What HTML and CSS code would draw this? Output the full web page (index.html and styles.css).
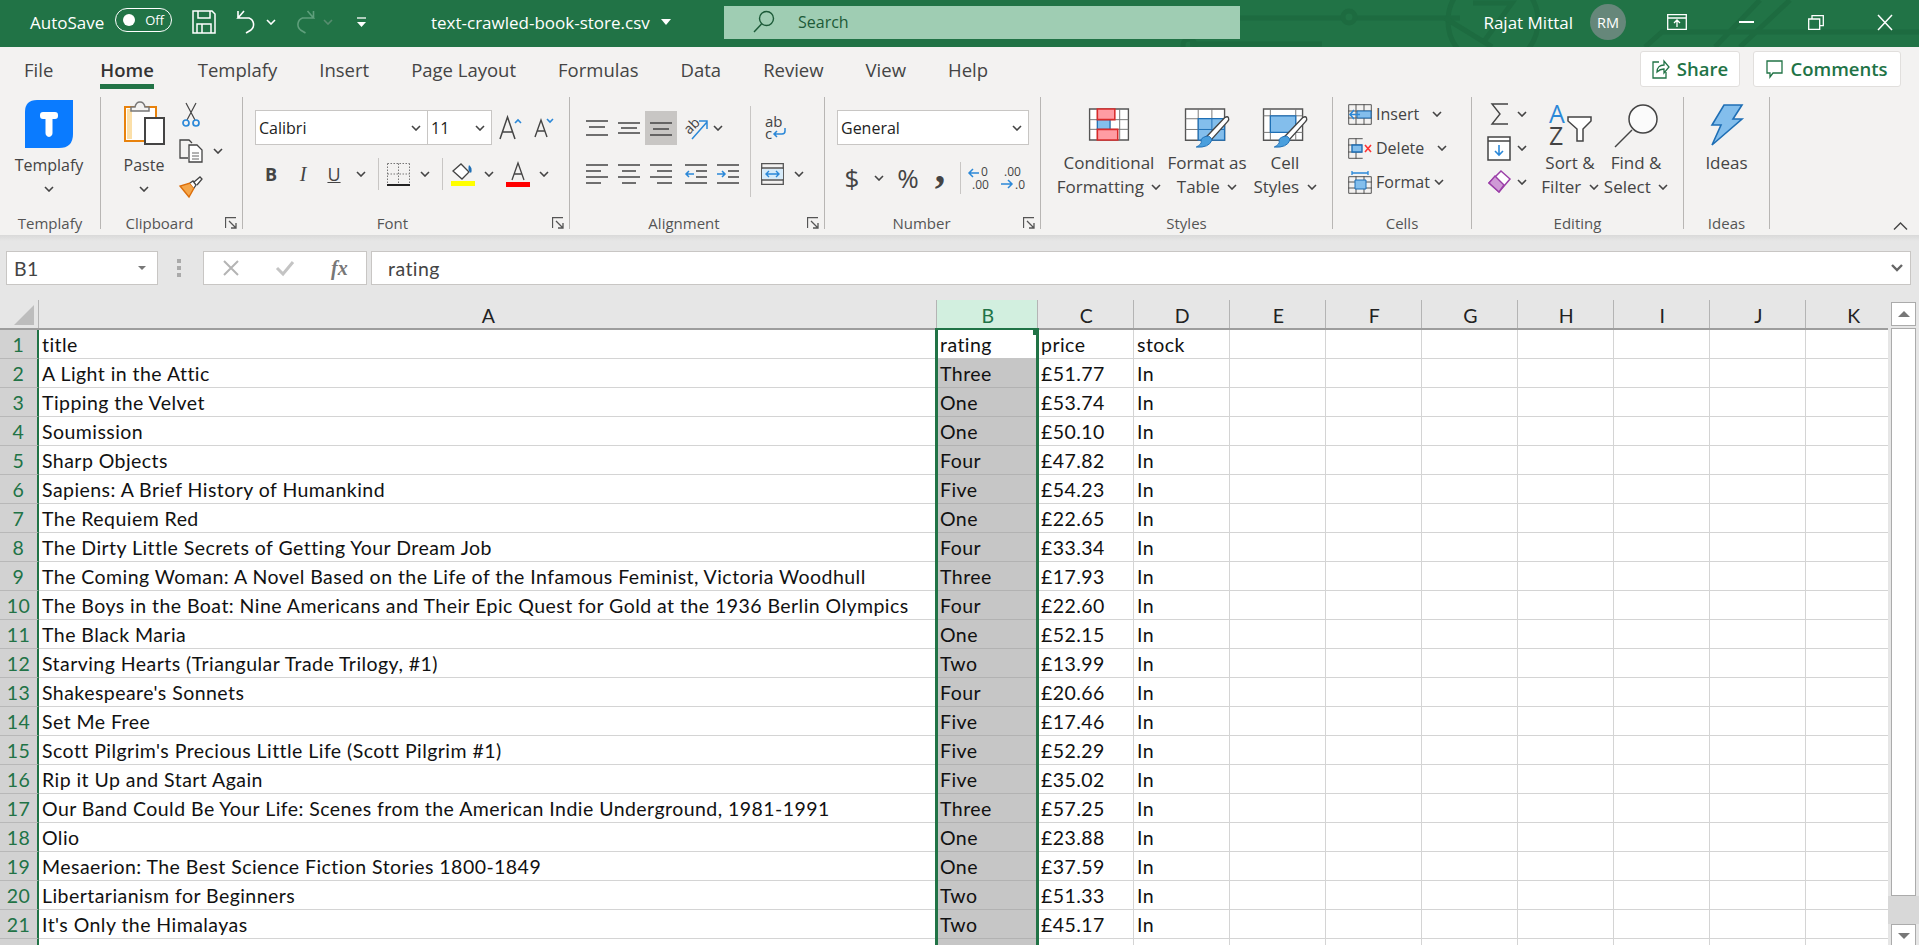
FILE: index.html
```html
<!DOCTYPE html>
<html lang="en">
<head>
  <meta charset="UTF-8" />
  <title>text-crawled-book-store.csv - Excel</title>
  <link rel="stylesheet" href="styles.css">
</head>
<body>
  <svg class="sprite" width="0" height="0">
    <symbol id="chev" viewBox="0 0 10 6"><path d="M1 1l4 4 4-4" fill="none" stroke="#444" stroke-width="1.6"/></symbol>
    <symbol id="launch" viewBox="0 0 12 12"><path d="M.5 11V.5H11M4 4l7 7M11 6v5H6" fill="none" stroke="#555" stroke-width="1.3"/></symbol>
  </svg>

  <header class="titlebar">
    <svg class="circuit" width="819" height="47" viewBox="0 0 819 47">
      <g fill="none" stroke="#1d6b40" stroke-width="5">
        <path d="M87 18H243M255 18H360"/>
        <circle cx="249" cy="17" r="6"/>
        <path d="M90 44H222M83 47v-2a6 6 0 0 1 12 0v2"/>
        <circle cx="393" cy="21" r="45"/>
        <path d="M373 3H412L385 40M345 18L392 47"/>
        <path d="M545 47L562 32H819M615 47L660 0M640 47L690 0"/>
      </g>
    </svg>
    <span class="autosave">AutoSave</span>
    <span class="toggle"><i></i>Off</span>
    <svg class="qa-save" width="24" height="24" viewBox="0 0 24 24"><path d="M1 1h19l3 3v19H1zM6 1v7h12V1M5 23v-9h14v9M10 14v9" fill="none" stroke="#fff" stroke-width="1.5"/></svg>
    <svg class="qa-undo" width="22" height="24" viewBox="0 0 22 24"><path d="M8 1L2 8h11a7 7 0 0 1 2 12l-5 3M2 8l0-7" fill="none" stroke="#fff" stroke-width="1.6"/></svg>
    <svg class="qa-chev" width="10" height="6"><use href="#chev" class="white"/></svg>
    <svg class="qa-redo" width="23" height="24" viewBox="0 0 22 24"><path d="M14 1l6 7H9a7 7 0 0 0-2 12l5 3M20 8V1" fill="none" stroke="#5f9f7c" stroke-width="1.6"/></svg>
    <svg class="qa-chev dim" width="10" height="6"><use href="#chev"/></svg>
    <svg class="qa-more" width="9" height="11" viewBox="0 0 9 11"><path d="M0 1h9" stroke="#fff" stroke-width="1.3"/><path d="M0 5h9L4.500 10z" fill="#fff"/></svg>
    <span class="filename">text-crawled-book-store.csv</span>
    <span class="caret"></span>
    <div class="searchbox">
      <svg width="22" height="24" viewBox="0 0 22 24"><circle cx="13.500" cy="8.500" r="7" fill="none" stroke="#1c5a38" stroke-width="1.4"/><path d="M8.500 14L1 22" stroke="#1c5a38" stroke-width="1.4"/></svg>
      <span>Search</span>
    </div>
    <span class="username">Rajat Mittal</span>
    <span class="avatar">RM</span>
    <svg class="win-ribbon" width="20" height="16" viewBox="0 0 20 16"><path d="M.7.7h18.600v14.600H.7zM.7 4h18.600M10 13V6M7 9l3-3 3 3" fill="none" stroke="#fff" stroke-width="1.3"/></svg>
    <span class="win-min"></span>
    <svg class="win-restore" width="16" height="15" viewBox="0 0 16 15"><path d="M.7 4h11v10.300H.7zM4 4V.7h11.300v10H12" fill="none" stroke="#fff" stroke-width="1.3"/></svg>
    <svg class="win-close" width="16" height="15" viewBox="0 0 16 15"><path d="M1 0l14 15M15 0L1 15" stroke="#fff" stroke-width="1.5"/></svg>
  </header>

  <nav class="tabs">
    <span class="tab">File</span>
    <span class="tab active">Home</span>
    <span class="tab">Templafy</span>
    <span class="tab">Insert</span>
    <span class="tab">Page Layout</span>
    <span class="tab">Formulas</span>
    <span class="tab">Data</span>
    <span class="tab">Review</span>
    <span class="tab">View</span>
    <span class="tab">Help</span>
    <div class="tab-actions">
      <span class="action share">
        <svg width="18" height="20" viewBox="0 0 18 20"><path d="M7 3H1v16h13v-6M5 13c0-5 3-7 7-7V2l5 6-5 6v-4c-3 0-5 1-7 3z" fill="none" stroke="#217346" stroke-width="1.300"/></svg>
        Share
      </span>
      <span class="action comments">
        <svg width="17" height="19" viewBox="0 0 17 19"><path d="M1 1h15v12H7l-3 4v-4H1z" fill="none" stroke="#217346" stroke-width="1.300"/></svg>
        Comments
      </span>
    </div>
  </nav>

  <section class="ribbon">
    <div class="group g-templafy">
      <div class="body">
        <div class="big w98">
          <div class="big-icon">
            <svg width="48" height="48" viewBox="0 0 48 48"><path d="M12 0H48V34Q48 48 34 48H0V12Q0 0 12 0Z" fill="#0a7bff"/><path d="M18 12H30Q33 12 33 15V16Q33 19 30 19H27.500V33Q27.500 36 24 37Q20.500 36 20.500 33V19H18Q15 19 15 16V15Q15 12 18 12Z" fill="#fff"/></svg>
          </div>
          <span>Templafy</span>
          <svg class="chev-line" width="10" height="6"><use href="#chev"/></svg>
        </div>
      </div>
      <div class="label">Templafy</div>
    </div>

    <div class="group g-clipboard">
      <div class="body">
        <div class="big w60">
          <div class="big-icon">
            <svg width="41" height="45" viewBox="0 0 41 45">
              <path d="M1 7h31v34H1z" fill="#fff" stroke="#e8820c" stroke-width="2"/>
              <path d="M3 9h5v30H3z" fill="#fbdfa8"/>
              <path d="M7 11V7h4q1-5 5-5t5 5h4v4z" fill="#f3f2f1" stroke="#777" stroke-width="1.500"/>
              <path d="M21 18h19v26H21z" fill="#fff" stroke="#444" stroke-width="2"/>
            </svg>
          </div>
          <span>Paste</span>
          <svg class="chev-line" width="10" height="6"><use href="#chev"/></svg>
        </div>
        <div class="clip-tools">
          <svg width="18" height="24" viewBox="0 0 18 24"><path d="M4 0l9 17M14 0L5 17" stroke="#444" stroke-width="1.200"/><circle cx="4" cy="20" r="3" fill="none" stroke="#2b88d8" stroke-width="1.700"/><circle cx="14" cy="20" r="3" fill="none" stroke="#2b88d8" stroke-width="1.700"/></svg>
          <i></i>
          <svg width="24" height="24" viewBox="0 0 24 24"><path d="M9 19H1V1h9l3 3" fill="none" stroke="#444" stroke-width="1.300"/><path d="M10 6h8l5 5v12H10z" fill="#fff" stroke="#444" stroke-width="1.300"/><path d="M13 14h7M13 17h7M13 20h7" stroke="#666"/></svg>
          <svg width="10" height="6"><use href="#chev"/></svg>
          <svg width="24" height="22" viewBox="0 0 24 22"><path d="M1 10l9 11 5-9-4-5z" fill="#f5a649" stroke="#dc6e0a" stroke-width="1.400"/><path d="M11 7l3-2 3 4-2 3M15 6l6-5 2 2-5 6" fill="#fff" stroke="#444" stroke-width="1.300"/></svg>
          <i></i>
        </div>
      </div>
      <div class="label">Clipboard</div>
      <svg class="launcher" width="12" height="12"><use href="#launch"/></svg>
    </div>

    <div class="group g-font">
      <div class="body stacked">
        <div class="font-row1">
          <div class="combo"><span>Calibri</span><svg width="10" height="6"><use href="#chev"/></svg></div>
          <div class="combo"><span>11</span><svg width="10" height="6"><use href="#chev"/></svg></div>
          <svg width="23" height="24" viewBox="0 0 23 24"><path d="M1 23L8.500 1 16 23M4 16h9" fill="none" stroke="#444" stroke-width="1.500"/><path d="M16 7l3-3 3 3" fill="none" stroke="#2b88d8" stroke-width="1.600"/></svg>
          <svg width="20" height="21" viewBox="0 0 20 21"><path d="M1 20L7 3l6 17M3.500 14h7" fill="none" stroke="#444" stroke-width="1.400"/><path d="M13 2l3 3 3-3" fill="none" stroke="#2b88d8" stroke-width="1.600"/></svg>
        </div>
        <div class="font-row2">
          <b class="fmt">B</b>
          <i class="fmt serif">I</i>
          <u class="fmt">U</u>
          <svg width="10" height="6"><use href="#chev"/></svg>
          <span class="vsep"></span>
          <svg width="23" height="23" viewBox="0 0 23 23"><path d="M.5.500h22M.5 11h22M11.500.5v21M.5.500v21M22.500.5v21" stroke="#777" stroke-dasharray="1.500 1.500"/><path d="M0 22h23" stroke="#222" stroke-width="2"/></svg>
          <svg width="10" height="6"><use href="#chev"/></svg>
          <span class="vsep"></span>
          <svg width="24" height="24" viewBox="0 0 24 24"><path d="M2 9l8-7 8 8-7 7z" fill="#fff" stroke="#444" stroke-width="1.300"/><path d="M18 3q4 3 2 8-4-3-2-8z" fill="#1f6fb5"/><path d="M0 19h24v5H0z" fill="#ff0"/></svg>
          <svg width="10" height="6"><use href="#chev"/></svg>
          <svg width="24" height="25" viewBox="0 0 24 25"><path d="M6 18L12 1l6 17M8 12h8" fill="none" stroke="#444" stroke-width="1.300"/><path d="M0 20h24v5H0z" fill="#f00"/></svg>
          <svg width="10" height="6"><use href="#chev"/></svg>
        </div>
      </div>
      <div class="label">Font</div>
      <svg class="launcher" width="12" height="12"><use href="#launch"/></svg>
    </div>

    <div class="group g-align">
      <div class="body">
        <div class="align-left">
          <div class="align-row1">
            <svg width="22" height="16" viewBox="0 0 22 16"><path d="M0 1h22M3 7h16M0 15h22" stroke="#444" stroke-width="1.400"/></svg>
            <svg width="22" height="16" viewBox="0 0 22 16"><path d="M0 3h22M3 8h16M0 13h22" stroke="#444" stroke-width="1.400"/></svg>
            <span class="pressed"><svg width="22" height="16" viewBox="0 0 22 16"><path d="M0 3h22M3 9h16M0 15h22" stroke="#444" stroke-width="1.400"/></svg></span>
            <svg width="24" height="24" viewBox="0 0 24 24"><text x="1" y="15" class="svg-ab small" transform="rotate(-45 8 12)">ab</text><path d="M8 23L23 6M15 5h8v8" fill="none" stroke="#2b88d8" stroke-width="1.500"/></svg>
            <svg width="10" height="6"><use href="#chev"/></svg>
          </div>
          <div class="align-row2">
            <svg width="22" height="20" viewBox="0 0 22 20"><path d="M0 1h22M0 7h15M0 13h22M0 19h15" stroke="#444" stroke-width="1.400"/></svg>
            <svg width="22" height="20" viewBox="0 0 22 20"><path d="M0 1h22M4 7h14M0 13h22M4 19h14" stroke="#444" stroke-width="1.400"/></svg>
            <svg width="22" height="20" viewBox="0 0 22 20"><path d="M0 1h22M7 7h15M0 13h22M7 19h15" stroke="#444" stroke-width="1.400"/></svg>
            <svg width="22" height="20" viewBox="0 0 22 20"><path d="M0 1h22M11 7h11M11 13h11M0 19h22" stroke="#444" stroke-width="1.400"/><path d="M9 10H1M4 7l-3 3 3 3" fill="none" stroke="#2b88d8" stroke-width="1.500"/></svg>
            <svg width="22" height="20" viewBox="0 0 22 20"><path d="M0 1h22M11 7h11M11 13h11M0 19h22" stroke="#444" stroke-width="1.400"/><path d="M0 10h8M5 7l3 3-3 3" fill="none" stroke="#2b88d8" stroke-width="1.500"/></svg>
          </div>
        </div>
        <span class="vsep tall"></span>
        <div class="align-right">
          <div class="wrap-row">
            <svg width="21" height="23" viewBox="0 0 21 23"><text x="0" y="10" class="svg-ab">ab</text><text x="0" y="22" class="svg-ab">c</text><path d="M20 11v3q0 3-3 3H9M12 14l-3 3 3 3" fill="none" stroke="#2b88d8" stroke-width="1.500"/></svg>
          </div>
          <div class="merge-row">
            <svg width="23" height="22" viewBox="0 0 23 22"><path d="M.7.7h21.600v20.600H.7zM0 5h23M0 17h23" fill="none" stroke="#555" stroke-width="1.300"/><path d="M1 6h21v10H1z" fill="#d7ebf9"/><path d="M5 11h13M8 8l-3 3 3 3M15 8l3 3-3 3" fill="none" stroke="#2b88d8" stroke-width="1.400"/></svg>
            <svg width="10" height="6"><use href="#chev"/></svg>
          </div>
        </div>
      </div>
      <div class="label">Alignment</div>
      <svg class="launcher" width="12" height="12"><use href="#launch"/></svg>
    </div>

    <div class="group g-number">
      <div class="body stacked">
        <div class="combo general"><span>General</span><svg width="10" height="6"><use href="#chev"/></svg></div>
        <div class="number-row">
          <span class="sym dollar">$</span>
          <svg width="10" height="6"><use href="#chev"/></svg>
          <span class="sym percent">%</span>
          <span class="sym comma">,</span>
          <span class="vsep"></span>
          <svg width="24" height="24" viewBox="0 0 24 24"><text x="13" y="10" class="svg-num">0</text><text x="4" y="23" class="svg-num">.00</text><path d="M11 7H1M5 3L1 7l4 4" fill="none" stroke="#2b88d8" stroke-width="1.500"/></svg>
          <svg width="24" height="24" viewBox="0 0 24 24"><text x="4" y="10" class="svg-num">.00</text><text x="15" y="23" class="svg-num">.0</text><path d="M1 18h11M8 14l4 4-4 4" fill="none" stroke="#2b88d8" stroke-width="1.500"/></svg>
        </div>
      </div>
      <div class="label">Number</div>
      <svg class="launcher" width="12" height="12"><use href="#launch"/></svg>
    </div>

    <div class="group g-styles">
      <div class="body">
        <div class="big w100">
          <div class="big-icon low">
            <svg width="42" height="33" viewBox="0 0 42 34">
              <path d="M1 1h40v32H1z" fill="#fff" stroke="#555" stroke-width="1.400"/>
              <path d="M1 12h40M1 22h40M9 1v32M22 1v32M32 1v32" stroke="#777"/>
              <path d="M9 12h13v10H9z" fill="#83beec" stroke="#1f6fb5" stroke-width="1.200"/>
              <path d="M9 1h18v11H9zM9 22h21v11H9z" fill="#ff9ca3" stroke="#d92b2b" stroke-width="1.600"/>
            </svg>
          </div>
          <span>Conditional</span>
          <span>Formatting <svg class="chev-inline" width="10" height="6"><use href="#chev"/></svg></span>
        </div>
        <div class="big w96">
          <div class="big-icon low">
            <svg width="46" height="41" viewBox="0 0 46 42">
              <path d="M1 1h40v32H1z" fill="#fff" stroke="#555" stroke-width="1.400"/>
              <path d="M1 11h40M1 22h40M14 1v32M28 1v32" stroke="#777"/>
              <path d="M14 11h27v22H14z" fill="#83beec" stroke="#1f6fb5" stroke-width="1.300"/>
              <path d="M14 22h27M28 11v22" stroke="#1f6fb5"/>
              <path d="M22 30L41 10q3-2 4 0t-1 4L27 33z" fill="#fff" stroke="#444" stroke-width="1.400"/>
              <path d="M22 29q5-1 6 4-3 8-16 7 6-3 5-6t5-5z" fill="#4a9fdd" stroke="#1f6fb5"/>
            </svg>
          </div>
          <span>Format as</span>
          <span>Table <svg class="chev-inline" width="10" height="6"><use href="#chev"/></svg></span>
        </div>
        <div class="big w60">
          <div class="big-icon low">
            <svg width="46" height="41" viewBox="0 0 46 42">
              <path d="M1 1h40v32H1z" fill="#fff" stroke="#555" stroke-width="1.400"/>
              <path d="M1 8h40M1 25h40M8 1v32M34 1v32" stroke="#777"/>
              <path d="M8 8h26v17H8z" fill="#83beec" stroke="#1f6fb5" stroke-width="1.300"/>
              <path d="M22 30L41 10q3-2 4 0t-1 4L27 33z" fill="#fff" stroke="#444" stroke-width="1.400"/>
              <path d="M22 29q5-1 6 4-3 8-16 7 6-3 5-6t5-5z" fill="#4a9fdd" stroke="#1f6fb5"/>
            </svg>
          </div>
          <span>Cell</span>
          <span>Styles <svg class="chev-inline" width="10" height="6"><use href="#chev"/></svg></span>
        </div>
      </div>
      <div class="label">Styles</div>
    </div>

    <div class="group g-cells">
      <div class="body stacked">
        <div class="cell-row">
          <svg width="24" height="21" viewBox="0 0 24 21"><path d="M.7.7h22.600v19.600H.7zM0 7h24M0 14h24M8 0v21M16 0v21" fill="none" stroke="#555"/><path d="M9 7h14v7H9z" fill="#83beec" stroke="#1f6fb5"/><path d="M12 10.500H2M6 6l-4 4.500L6 15" fill="none" stroke="#2b88d8" stroke-width="1.600"/></svg>
          <span>Insert</span>
          <svg width="10" height="6"><use href="#chev"/></svg>
        </div>
        <div class="cell-row">
          <svg width="24" height="21" viewBox="0 0 24 21"><path d="M.7.7h14M.7.7v19.600h14M0 7h14M0 14h14M8 0v21" fill="none" stroke="#555"/><path d="M4 7h10v7H4z" fill="#83beec" stroke="#1f6fb5" stroke-width="1.400"/><path d="M17 7l6 7M23 7l-6 7" stroke="#f33" stroke-width="1.600"/></svg>
          <span>Delete</span>
          <svg width="10" height="6"><use href="#chev"/></svg>
        </div>
        <div class="cell-row tight">
          <svg width="24" height="23" viewBox="0 0 24 23"><path d="M.7 5.700h22.600v16.600H.7zM0 11h24M0 17h24M8 5v18M16 5v18" fill="none" stroke="#555"/><path d="M7 9h11v9H7z" fill="#83beec" stroke="#1f6fb5"/><path d="M4 2h16M4 0v4M20 0v4" stroke="#2b88d8" stroke-width="1.300"/></svg>
          <span>Format</span>
          <svg width="10" height="6"><use href="#chev"/></svg>
        </div>
      </div>
      <div class="label">Cells</div>
    </div>

    <div class="group g-editing">
      <div class="body">
        <div class="edit-tools">
          <svg width="19" height="22" viewBox="0 0 19 22"><path d="M18 1H2l8 10-8 10h16" fill="none" stroke="#444" stroke-width="1.400"/></svg>
          <svg width="10" height="6"><use href="#chev"/></svg>
          <svg width="24" height="25" viewBox="0 0 24 25"><path d="M1 1h22v23H1zM1 5h22" fill="#fff" stroke="#444" stroke-width="1.500"/><path d="M12 9v10M8 15l4 4 4-4" fill="none" stroke="#2b88d8" stroke-width="1.600"/></svg>
          <svg width="10" height="6"><use href="#chev"/></svg>
          <svg width="24" height="24" viewBox="0 0 24 24"><path d="M14 1l9 8-11 13-10-9z" fill="#fff" stroke="#9b3fa8" stroke-width="1.500"/><path d="M2 13l6-7 9 9-5 7z" fill="#cf9ad6" stroke="#9b3fa8" stroke-width="1.500"/></svg>
          <svg width="10" height="6"><use href="#chev"/></svg>
        </div>
        <div class="big w70">
          <div class="big-icon up">
            <svg width="43" height="42" viewBox="0 0 43 42"><text x="0" y="19" class="svg-az blue">A</text><text x="0" y="41" class="svg-az">Z</text><path d="M19 13h23v4l-8 8v12h-6V25l-9-8z" fill="#fff" stroke="#444" stroke-width="1.500"/></svg>
          </div>
          <span>Sort &amp;</span>
          <span>Filter <svg class="chev-inline" width="10" height="6"><use href="#chev"/></svg></span>
        </div>
        <div class="big w62">
          <div class="big-icon up">
            <svg width="44" height="44" viewBox="0 0 44 44"><circle cx="29" cy="15" r="14" fill="#fbfbfb" stroke="#444" stroke-width="1.500"/><path d="M18 26L1 43" stroke="#444" stroke-width="1.500"/></svg>
          </div>
          <span>Find &amp;</span>
          <span>Select <svg class="chev-inline" width="10" height="6"><use href="#chev"/></svg></span>
        </div>
      </div>
      <div class="label">Editing</div>
    </div>

    <div class="group g-ideas">
      <div class="body">
        <div class="big w85">
          <div class="big-icon up">
            <svg width="32" height="42" viewBox="0 0 32 42"><path d="M13 1h18L22 15h9L1 41l9-20H1z" fill="#83beec" stroke="#1f6fb5" stroke-width="1.600"/></svg>
          </div>
          <span>Ideas</span>
        </div>
      </div>
      <div class="label">Ideas</div>
    </div>

    <svg class="collapse" width="15" height="8" viewBox="0 0 15 8"><path d="M1 7.500l6.500-6.500L14 7.500" fill="none" stroke="#444" stroke-width="1.400"/></svg>
  </section>

  <section class="formula-area">
    <div class="namebox">
      <span>B1</span>
      <i class="mini-caret"></i>
    </div>
    <div class="dots"><i></i><i></i><i></i></div>
    <div class="fx-buttons">
      <svg width="16" height="16" viewBox="0 0 16 16"><path d="M1 1l14 14M15 1L1 15" stroke="#b4b4b4" stroke-width="2"/></svg>
      <svg width="18" height="16" viewBox="0 0 18 16"><path d="M1 8l6 6L17 2" fill="none" stroke="#c4c4c4" stroke-width="3"/></svg>
      <span class="fx">fx</span>
    </div>
    <div class="fx-input">
      <span>rating</span>
      <svg width="12" height="8" viewBox="0 0 12 8"><path d="M1 1l5 5 5-5" fill="none" stroke="#666" stroke-width="2.400"/></svg>
    </div>
  </section>

  <main class="sheet">
    <div class="grid">
      <div class="row head">
        <div class="c-num corner"><i></i></div>
        <div class="c-a">A</div>
        <div class="c-b">B</div>
        <div class="c-c">C</div>
        <div class="c-d">D</div>
        <div class="c-col">E</div>
        <div class="c-col">F</div>
        <div class="c-col">G</div>
        <div class="c-col">H</div>
        <div class="c-col">I</div>
        <div class="c-col">J</div>
        <div class="c-col last">K</div>
      </div>
      <div class="row first"><div class="c-num">1</div><div class="c-a">title</div><div class="c-b">rating</div><div class="c-c">price</div><div class="c-d">stock</div><div class="c-rest"></div></div>
      <div class="row"><div class="c-num">2</div><div class="c-a">A Light in the Attic</div><div class="c-b">Three</div><div class="c-c">£51.77</div><div class="c-d">In</div><div class="c-rest"></div></div>
      <div class="row"><div class="c-num">3</div><div class="c-a">Tipping the Velvet</div><div class="c-b">One</div><div class="c-c">£53.74</div><div class="c-d">In</div><div class="c-rest"></div></div>
      <div class="row"><div class="c-num">4</div><div class="c-a">Soumission</div><div class="c-b">One</div><div class="c-c">£50.10</div><div class="c-d">In</div><div class="c-rest"></div></div>
      <div class="row"><div class="c-num">5</div><div class="c-a">Sharp Objects</div><div class="c-b">Four</div><div class="c-c">£47.82</div><div class="c-d">In</div><div class="c-rest"></div></div>
      <div class="row"><div class="c-num">6</div><div class="c-a">Sapiens: A Brief History of Humankind</div><div class="c-b">Five</div><div class="c-c">£54.23</div><div class="c-d">In</div><div class="c-rest"></div></div>
      <div class="row"><div class="c-num">7</div><div class="c-a">The Requiem Red</div><div class="c-b">One</div><div class="c-c">£22.65</div><div class="c-d">In</div><div class="c-rest"></div></div>
      <div class="row"><div class="c-num">8</div><div class="c-a">The Dirty Little Secrets of Getting Your Dream Job</div><div class="c-b">Four</div><div class="c-c">£33.34</div><div class="c-d">In</div><div class="c-rest"></div></div>
      <div class="row"><div class="c-num">9</div><div class="c-a">The Coming Woman: A Novel Based on the Life of the Infamous Feminist, Victoria Woodhull</div><div class="c-b">Three</div><div class="c-c">£17.93</div><div class="c-d">In</div><div class="c-rest"></div></div>
      <div class="row"><div class="c-num">10</div><div class="c-a">The Boys in the Boat: Nine Americans and Their Epic Quest for Gold at the 1936 Berlin Olympics</div><div class="c-b">Four</div><div class="c-c">£22.60</div><div class="c-d">In</div><div class="c-rest"></div></div>
      <div class="row"><div class="c-num">11</div><div class="c-a">The Black Maria</div><div class="c-b">One</div><div class="c-c">£52.15</div><div class="c-d">In</div><div class="c-rest"></div></div>
      <div class="row"><div class="c-num">12</div><div class="c-a">Starving Hearts (Triangular Trade Trilogy, #1)</div><div class="c-b">Two</div><div class="c-c">£13.99</div><div class="c-d">In</div><div class="c-rest"></div></div>
      <div class="row"><div class="c-num">13</div><div class="c-a">Shakespeare's Sonnets</div><div class="c-b">Four</div><div class="c-c">£20.66</div><div class="c-d">In</div><div class="c-rest"></div></div>
      <div class="row"><div class="c-num">14</div><div class="c-a">Set Me Free</div><div class="c-b">Five</div><div class="c-c">£17.46</div><div class="c-d">In</div><div class="c-rest"></div></div>
      <div class="row"><div class="c-num">15</div><div class="c-a">Scott Pilgrim's Precious Little Life (Scott Pilgrim #1)</div><div class="c-b">Five</div><div class="c-c">£52.29</div><div class="c-d">In</div><div class="c-rest"></div></div>
      <div class="row"><div class="c-num">16</div><div class="c-a">Rip it Up and Start Again</div><div class="c-b">Five</div><div class="c-c">£35.02</div><div class="c-d">In</div><div class="c-rest"></div></div>
      <div class="row"><div class="c-num">17</div><div class="c-a">Our Band Could Be Your Life: Scenes from the American Indie Underground, 1981-1991</div><div class="c-b">Three</div><div class="c-c">£57.25</div><div class="c-d">In</div><div class="c-rest"></div></div>
      <div class="row"><div class="c-num">18</div><div class="c-a">Olio</div><div class="c-b">One</div><div class="c-c">£23.88</div><div class="c-d">In</div><div class="c-rest"></div></div>
      <div class="row"><div class="c-num">19</div><div class="c-a">Mesaerion: The Best Science Fiction Stories 1800-1849</div><div class="c-b">One</div><div class="c-c">£37.59</div><div class="c-d">In</div><div class="c-rest"></div></div>
      <div class="row"><div class="c-num">20</div><div class="c-a">Libertarianism for Beginners</div><div class="c-b">Two</div><div class="c-c">£51.33</div><div class="c-d">In</div><div class="c-rest"></div></div>
      <div class="row"><div class="c-num">21</div><div class="c-a">It's Only the Himalayas</div><div class="c-b">Two</div><div class="c-c">£45.17</div><div class="c-d">In</div><div class="c-rest"></div></div>
      <div class="row"><div class="c-num"></div><div class="c-a"></div><div class="c-b"></div><div class="c-c"></div><div class="c-d"></div><div class="c-rest"></div></div>
      <div class="selection"><i></i></div>
    </div>
    <aside class="scrollbar">
      <div class="sb-btn"><span class="sb-up"></span></div>
      <div class="sb-thumb"></div>
      <div class="sb-track"></div>
      <div class="sb-btn"><span class="sb-down"></span></div>
    </aside>
  </main>
</body>
</html>
```

FILE: styles.css
```css
* {
  box-sizing: border-box;
}
html, body {
  margin: 0;
  height: 945px;
  overflow: hidden;
}
body {
  background: #f3f2f1;
  font-family: "Open Sans", sans-serif;
  color: #444;
}
.sprite {
  position: absolute;
}
svg {
  display: block;
  flex: none;
  overflow: visible;
}

/* title bar */
.titlebar {
  position: relative;
  display: flex;
  align-items: center;
  height: 47px;
  padding: 0 26px 3px 30px;
  background: #217346;
  color: #fff;
  font-size: 17px;
}
.titlebar > * {
  position: relative;
}
.titlebar .circuit {
  position: absolute;
  right: 0;
  top: 0;
  overflow: hidden;
}
.autosave {
  width: 85px;
}
.toggle {
  display: flex;
  align-items: center;
  justify-content: space-between;
  width: 57px;
  height: 24px;
  margin-bottom: 4px;
  padding: 0 7px 0 7px;
  border: 1px solid #fff;
  border-radius: 12px;
  font-size: 13px;
}
.toggle i {
  width: 12px;
  height: 12px;
  border-radius: 50%;
  background: #fff;
}
.qa-save { margin-left: 20px; }
.qa-undo { margin-left: 20px; }
.qa-chev { margin-left: 8px; }
.qa-redo { margin-left: 17px; }
.qa-chev.dim { margin-left: 7px; opacity: .35; filter: invert(1); }
.qa-chev:not(.dim) { filter: invert(1) brightness(2); }
.qa-more { margin-left: 24px; }
.filename {
  width: 227px;
  margin-left: 65px;
  white-space: nowrap;
}
.caret {
  width: 0;
  height: 0;
  margin-left: 3px;
  border: 5px solid transparent;
  border-top: 6px solid #fff;
  border-bottom: 0;
}
.searchbox {
  display: flex;
  align-items: center;
  width: 516px;
  height: 33px;
  margin-left: 53px;
  padding-left: 29px;
  background: #9fcdb3;
  color: #1c5a38;
  font-size: 16px;
}
.searchbox span {
  margin-left: 23px;
}
.username {
  margin-left: auto;
}
.avatar {
  display: flex;
  align-items: center;
  justify-content: center;
  width: 36px;
  height: 36px;
  margin-left: 17px;
  border-radius: 50%;
  background: #66877a;
  font-size: 14.5px;
}
.win-ribbon { margin-left: 41px; }
.win-min {
  width: 15px;
  height: 2px;
  margin-left: 52px;
  background: #fff;
}
.win-restore { margin-left: 54px; }
.win-close { margin-left: 53px; }

/* tabs */
.tabs {
  display: flex;
  align-items: flex-start;
  height: 41px;
  padding: 11px 18px 0 24px;
  font-size: 18.5px;
  line-height: 24px;
}
.tab {
  margin-right: 42px;
  padding-bottom: 2px;
}
.tab.active {
  margin-right: 44px;
  border-bottom: 5px solid #217346;
  font-weight: 600;
  color: #333;
}
.tab:first-child {
  margin-right: 47px;
}
.tab-actions {
  display: flex;
  gap: 13px;
  margin: -7px 0 0 auto;
}
.action {
  display: flex;
  align-items: center;
  justify-content: center;
  gap: 7px;
  height: 36px;
  border: 1px solid #e1dfdd;
  border-radius: 3px;
  background: #fff;
  color: #217346;
  font-weight: 600;
  font-size: 18.5px;
}
.share { width: 100px; }
.comments { width: 148px; }

/* ribbon */
.ribbon {
  position: relative;
  display: flex;
  align-items: flex-start;
  height: 147px;
  padding-top: 9px;
}
.group {
  position: relative;
  display: flex;
  flex-direction: column;
  height: 132px;
  border-right: 1px solid #b8b6b4;
}
.g-templafy { width: 101px; }
.g-clipboard { width: 142px; }
.g-font { width: 327px; }
.g-align { width: 255px; }
.g-number { width: 216px; }
.g-styles { width: 292px; }
.g-cells { width: 139px; }
.g-editing { width: 212px; }
.g-ideas { width: 86px; }
.body {
  display: flex;
  flex: 1;
  min-height: 0;
}
.body.stacked {
  flex-direction: column;
}
.label {
  height: 20px;
  margin-bottom: -4px;
  font-size: 15px;
  line-height: 20px;
  text-align: center;
  color: #555;
}
.g-clipboard .label { padding-right: 24px; }
.g-font .label { padding-right: 27px; }
.g-align .label { padding-right: 26px; }
.g-number .label { padding-right: 22px; }
.launcher {
  position: absolute;
  right: 5px;
  bottom: 0;
}
.big {
  display: flex;
  flex-direction: column;
  align-items: center;
  flex: none;
  font-size: 16px;
  line-height: 24px;
  white-space: nowrap;
}
.g-styles .big, .g-editing .big, .g-ideas .big {
  font-size: 17px;
}
.big-icon {
  display: flex;
  align-items: flex-start;
  justify-content: center;
  height: 56px;
  padding-top: 3px;
}
.big-icon.up {
  height: 54px;
  padding-top: 7px;
}
.big-icon.low {
  height: 54px;
  padding-top: 11px;
}
.w60 { width: 60px; }
.w62 { width: 62px; }
.w70 { width: 70px; }
.w85 { width: 85px; }
.w96 { width: 96px; }
.w98 { width: 98px; }
.w100 { width: 100px; }
.chev-line {
  margin-top: 9px;
}
.chev-inline {
  display: inline-block;
  vertical-align: 3px;
  margin-left: 3px;
}
.g-clipboard .w60 { margin-left: 13px; }
.clip-tools {
  display: grid;
  grid-template-columns: 34px 20px;
  grid-auto-rows: 36px;
  place-items: center;
  align-self: flex-start;
}
.vsep {
  width: 1px;
  height: 32px;
  background: #c8c6c4;
}
.vsep.tall {
  height: 91px;
  margin-top: 9px;
  flex: none;
}

/* font group */
.g-font .body {
  padding: 13px 0 0 12px;
}
.font-row1 {
  display: grid;
  grid-template-columns: 173px 64px 36px 31px;
  height: 35px;
  justify-items: center;
  align-items: center;
}
.combo {
  display: flex;
  align-items: center;
  justify-content: space-between;
  width: 100%;
  height: 35px;
  padding: 0 6px 0 3px;
  border: 1px solid #c8c6c4;
  background: #fff;
  color: #222;
  font-size: 16px;
}
.combo + .combo {
  border-left: 0;
}
.font-row2 {
  display: grid;
  grid-template-columns: 32px 32px 30px 24px 10px 30px 24px 10px 32px 20px 38px 14px;
  height: 32px;
  margin-top: 13px;
  justify-items: center;
  align-items: center;
}
.fmt {
  font-size: 18px;
  color: #444;
}
.fmt.serif {
  font-family: "Liberation Serif", serif;
  font-size: 20px;
}

/* alignment group */
.align-left {
  width: 169px;
  margin-left: 11px;
  padding-top: 14px;
}
.align-row1, .align-row2 {
  display: grid;
  justify-items: center;
  align-items: center;
}
.align-row1 {
  grid-template-columns: 32px 32px 32px 38px 6px;
  height: 34px;
}
.align-row2 {
  grid-template-columns: 32px 32px 32px 38px 26px;
  height: 32px;
  margin-top: 13px;
}
.pressed {
  display: flex;
  align-items: center;
  justify-content: center;
  width: 32px;
  height: 34px;
  background: #c8c6c4;
}
.align-right {
  padding-top: 14px;
}
.wrap-row {
  display: flex;
  justify-content: center;
  align-items: center;
  width: 48px;
  height: 34px;
}
.merge-row {
  display: grid;
  grid-template-columns: 42px 12px;
  height: 32px;
  margin-top: 13px;
  justify-items: center;
  align-items: center;
}
.svg-ab {
  font-family: "Open Sans", sans-serif;
  font-size: 15px;
  fill: #444;
}
.svg-ab.small {
  font-size: 14px;
}
.svg-num {
  font-family: "Open Sans", sans-serif;
  font-size: 12px;
  fill: #444;
}
.svg-az {
  font-family: "Open Sans", sans-serif;
  font-size: 25px;
  fill: #444;
}
.svg-az.blue {
  fill: #2b88d8;
}

/* number group */
.g-number .body {
  padding: 13px 0 0 12px;
}
.combo.general {
  width: 192px;
  flex: none;
}
.number-row {
  display: grid;
  grid-template-columns: 30px 24px 34px 30px 10px 30px 34px;
  height: 32px;
  margin-top: 13px;
  justify-items: center;
  align-items: center;
}
.sym {
  font-size: 26px;
  line-height: 32px;
}
.sym.comma {
  margin-bottom: 20px;
  font-family: "Liberation Serif", serif;
  font-weight: bold;
  font-size: 42px;
  line-height: 20px;
}

/* styles, cells, editing */
.g-styles .body { padding-left: 18px; }
.g-cells .body {
  padding-left: 15px;
}
.cell-row {
  display: flex;
  align-items: center;
  gap: 13px;
  height: 34px;
  font-size: 16px;
}
.cell-row span {
  margin-left: -9px;
}
.cell-row.tight {
  gap: 4px;
}
.cell-row.tight span {
  margin-left: 0;
}
.g-editing .body {
  padding-left: 12px;
}
.edit-tools {
  display: grid;
  grid-template-columns: 30px 16px;
  grid-auto-rows: 34px;
  width: 46px;
  flex: none;
  place-items: center;
  align-self: flex-start;
}
.g-editing .w70 {
  margin-left: 5px;
}
.collapse {
  position: absolute;
  right: 11px;
  top: 134px;
}

/* formula bar */
.formula-area {
  display: flex;
  height: 65px;
  padding: 16px 8px 0 6px;
  background: linear-gradient(#d9d9d9, #e6e6e6 6px);
}
.namebox {
  display: flex;
  align-items: center;
  justify-content: space-between;
  width: 152px;
  height: 34px;
  padding: 0 11px 0 7px;
  border: 1px solid #c8c6c4;
  background: #fff;
  font-family: "Lato", sans-serif;
  font-size: 19.5px;
  letter-spacing: .45px;
  color: #444;
}
.mini-caret {
  border: 4px solid transparent;
  border-top: 4px solid #777;
  border-bottom: 0;
}
.dots {
  display: flex;
  flex-direction: column;
  justify-content: center;
  gap: 3px;
  width: 45px;
  height: 34px;
  padding-left: 19px;
}
.dots i {
  width: 4px;
  height: 4px;
  background: #aaa;
}
.fx-buttons {
  display: flex;
  align-items: center;
  width: 164px;
  height: 34px;
  padding-left: 19px;
  border: 1px solid #c8c6c4;
  background: #fff;
}
.fx-buttons svg + svg {
  margin-left: 37px;
}
.fx {
  margin-left: 37px;
  font-family: "Liberation Serif", serif;
  font-style: italic;
  font-weight: bold;
  font-size: 20px;
  color: #777;
}
.fx-input {
  display: flex;
  align-items: center;
  justify-content: space-between;
  flex: 1;
  height: 34px;
  margin-left: 4px;
  padding: 0 7px 0 16px;
  border: 1px solid #c8c6c4;
  background: #fff;
  font-family: "Lato", sans-serif;
  font-size: 19.5px;
  letter-spacing: .45px;
  color: #444;
}

/* sheet */
.sheet {
  display: flex;
  height: 645px;
  background: #e6e6e6;
}
.grid {
  position: relative;
  width: 1888px;
  background: #fff;
  font-family: "Lato", sans-serif;
  font-size: 19.5px;
  letter-spacing: .45px;
  color: #111;
}
.row {
  display: flex;
  height: 29px;
  line-height: 29px;
  border-bottom: 1px solid #d4d4d4;
}
.row > div {
  flex: none;
  height: 100%;
  padding-left: 3px;
  border-right: 1px solid #d4d4d4;
  white-space: nowrap;
}
.c-num { width: 39px; }
.c-a { width: 898px; }
.c-b { width: 101px; }
.c-c { width: 96px; }
.c-d { width: 96px; }
.c-col { width: 96px; }
.c-col.last { width: 82px; }
.c-rest { width: 658px; }
.row > .c-rest {
  padding: 0;
  border-right: 0;
  background: repeating-linear-gradient(to right, transparent 0 95px, #d4d4d4 95px 96px);
}
.row > .c-num {
  height: 29px;
  padding: 0;
  border-right: 2px solid #217346;
  border-bottom: 1px solid #b8b8b8;
  background: #d2d2d2;
  text-align: center;
  color: #217346;
}
.row > .c-b {
  height: 29px;
  border-bottom: 1px solid #b2b2b2;
  background: #c6c6c6;
}
.row.first > .c-b {
  border-bottom-color: #c6c6c6;
  background: #fff;
}
.row.head {
  height: 30px;
  line-height: 32px;
  border-bottom: 2px solid #9d9d9d;
  background: #e6e6e6;
}
.row.head > div {
  height: 28px;
  padding: 0 0 0 2px;
  border-right: 1px solid #b4b4b4;
  border-bottom: 0;
  text-align: center;
  color: #222;
}
.row.head > .c-b {
  background: #d2efdf;
  color: #217346;
}
.row.head > .c-col.last {
  padding-left: 14px;
  border-right: 0;
}
.row.head > .corner {
  position: relative;
  background: #e6e6e6;
  border-right: 1px solid #b4b4b4;
}
.corner i {
  position: absolute;
  left: 14px;
  top: 5px;
  border: 10.5px solid transparent;
  border-right-color: #bdbdbd;
  border-bottom-color: #bdbdbd;
}
.selection {
  position: absolute;
  left: 935px;
  top: 28px;
  width: 104px;
  bottom: -4px;
  border: 3px solid #217346;
  border-top-width: 2px;
}
.selection i {
  position: absolute;
  right: -3px;
  top: 0;
  width: 6px;
  height: 5px;
  background: #217346;
}

/* scrollbar */
.scrollbar {
  display: flex;
  flex-direction: column;
  width: 31px;
  padding: 2px 3px 0 3px;
  gap: 2px;
}
.sb-btn {
  display: flex;
  align-items: center;
  justify-content: center;
  flex: none;
  height: 24px;
  border: 1px solid #ababab;
  background: #fff;
}
.sb-up, .sb-down {
  border: 6px solid transparent;
  border-top: 0;
  border-bottom: 6px solid #777;
}
.sb-down {
  border-bottom: 0;
  border-top: 6px solid #777;
}
.sb-thumb {
  flex: none;
  height: 568px;
  border: 1px solid #ababab;
  background: #fff;
}
.sb-track {
  flex: none;
  height: 28px;
  margin: -2px -3px;
  background: #d8d8d8;
}
```
